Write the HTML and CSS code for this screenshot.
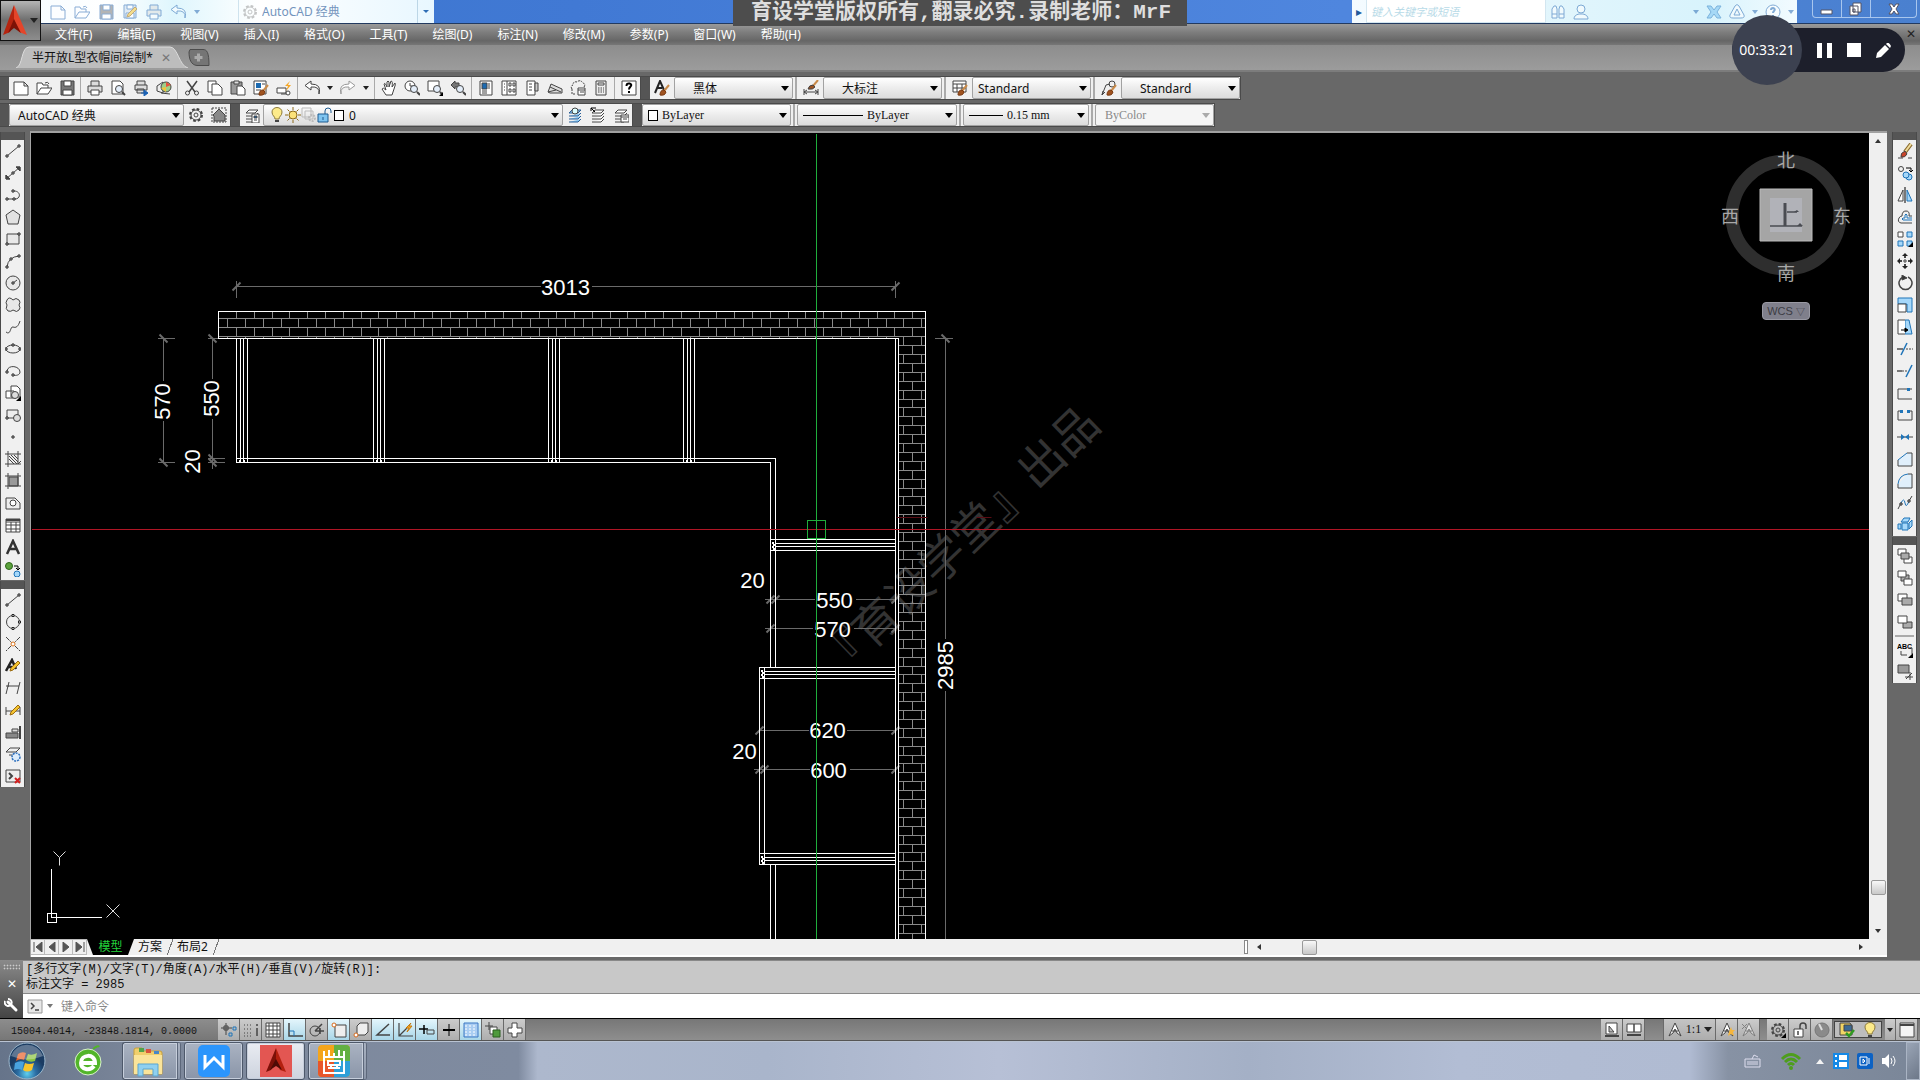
FILE: index.html
```html
<!DOCTYPE html>
<html lang="zh-CN">
<head>
    <meta charset="UTF-8">
    <meta name="viewport" content="width=device-width, initial-scale=1.0">
    <title>AutoCAD</title>
    <link rel="stylesheet" href="styles.css">
</head>
<body>

<header class="titlebar">
    <button class="app-btn" aria-label="应用程序">
        <svg width="24" height="34" viewBox="0 0 24 34"><path d="M11 1 0 31l7-3 4-9z" fill="#b5240f"/><path d="M11 1 24 31l-8-3-5-9z" fill="#e4452a"/><path d="M5 29 11 15l7 14-7-5z" fill="#7d1206"/></svg>
        <span class="caret light"></span>
    </button>
    <div class="quick">
        <div class="tools faded" data-tools="new open save saveas plot undo caret"></div>
        <label class="workspace-pick"><span data-icon="gear"></span>
            <select aria-label="工作空间"><option>AutoCAD 经典</option></select>
        </label>
        <button class="quick-more" aria-label="自定义"><span class="caret"></span></button>
    </div>
    <div class="notice">育设学堂版权所有,翻录必究.录制老师：MrF</div>
    <div class="infocenter">
        <button class="info-toggle" aria-label="展开">▸</button>
        <input type="text" placeholder="键入关键字或短语" aria-label="搜索">
        <div class="tools faded" data-tools="binoc user"></div>
        <div class="tools faded info-right" data-tools="caret exchange a360 caret help2 caret"></div>
    </div>
    <div class="winbtns">
        <button aria-label="最小化"><svg width="14" height="12"><path d="M1 7h11v4H1z" fill="#fff" stroke="#556"/></svg></button>
        <button aria-label="还原"><svg width="14" height="14"><path d="M4 1h8v9H4zM1 4h8v9H1zM4 7h2v3H4z" fill="#fff" stroke="#556"/></svg></button>
        <button aria-label="关闭" class="wide"><svg width="14" height="12"><path d="M2 1h3l2 3 2-3h3L9 6l3 5H9L7 8l-2 3H2l3-5z" fill="#fff" stroke="#556"/></svg></button>
    </div>
</header>

<nav class="menubar">
    <a href="#">文件(F)</a><a href="#">编辑(E)</a><a href="#">视图(V)</a><a href="#">插入(I)</a><a href="#">格式(O)</a><a href="#">工具(T)</a><a href="#">绘图(D)</a><a href="#">标注(N)</a><a href="#">修改(M)</a><a href="#">参数(P)</a><a href="#">窗口(W)</a><a href="#">帮助(H)</a>
    <button class="doc-close" aria-label="关闭图形">✕</button>
</nav>

<div class="filetabs">
    <div class="filetab">
        <svg class="filetab-shape" viewBox="0 0 172 22" preserveAspectRatio="none"><path d="M0 22C7 20 5 1 13 1H154C162 1 163 20 172 22" fill="#bdbdbd" stroke="#dcdcdc"/></svg>
        <span>半开放L型衣帽间绘制*</span><button aria-label="关闭">✕</button>
    </div>
    <button class="newtab" aria-label="新建"><svg width="22" height="17"><path d="M2 .5h13c4 0 6 3 6 16H9C3 16 1 10 1 3z" fill="#757575" stroke="#4c4c4c"/><path d="M10.500 4.500v8M6.500 8.500h8" stroke="#aaa" stroke-width="3"/></svg></button>
</div>

<div class="toolbars">
    <div class="toolrow">
        <div class="toolbar">
            <i class="grip"></i>
            <div class="tools" data-tools="new open save | plot preview publish cube3d | cut copy paste match blockedit | undo caret redo caret | pan zoomrt zoomwin zoomprev | props center palettes sheets markup calc | help"></div>
        </div>
        <div class="toolbar styles">
            <i class="grip"></i>
            <div class="tools" data-tools="textstyle"></div>
            <select class="combo mid indent" aria-label="文字样式"><option>黑体</option></select>
            <i class="sep"></i><div class="tools" data-tools="dimstyle"></div>
            <select class="combo mid indent" aria-label="标注样式"><option>大标注</option></select>
            <i class="sep"></i><div class="tools" data-tools="tablestyle"></div>
            <select class="combo mid" aria-label="表格样式"><option>Standard</option></select>
            <i class="sep"></i><div class="tools" data-tools="leaderstyle"></div>
            <select class="combo mid indent" aria-label="引线样式"><option>Standard</option></select>
        </div>
    </div>
    <div class="toolrow">
        <div class="toolbar">
            <i class="grip"></i>
            <select class="combo work indent-s" aria-label="工作空间"><option>AutoCAD 经典</option></select>
            <div class="tools" data-tools="gear home"></div>
        </div>
        <div class="toolbar">
            <i class="grip"></i>
            <div class="tools" data-tools="layerprops"></div>
            <label class="combo layer">
                <span data-icon="bulb"></span><span data-icon="sun"></span><span data-icon="freeze"></span><span data-icon="unlock"></span><i class="swatch"></i>
                <select aria-label="图层"><option>0</option></select>
            </label>
            <div class="tools" data-tools="layercur layerprev layerstate"></div>
        </div>
        <div class="toolbar">
            <i class="grip"></i>
            <label class="combo color"><i class="swatch"></i><select class="song" aria-label="颜色"><option>ByLayer</option></select></label>
            <i class="sep"></i>
            <label class="combo ltype"><i class="line long"></i><select class="song" aria-label="线型"><option>ByLayer</option></select></label>
            <i class="sep"></i>
            <label class="combo lweight"><i class="line"></i><select class="song" aria-label="线宽"><option>0.15 mm</option></select></label>
            <i class="sep"></i>
            <select class="combo mid song" aria-label="打印样式" disabled><option>ByColor</option></select>
        </div>
    </div>
</div>

<main class="workspace">
    <aside class="dock">
        <div class="vbar"><i class="grip"></i><div class="tools vert" data-tools="line xline pline polygon rect arc circle revcloud spline ellipse earc insert block point hatch gradient region table mtext addsel"></div></div>
        <div class="vbar"><i class="grip"></i><div class="tools vert" data-tools="line circ4 cross editxt dimbreak dimedit plate wipe cmdx"></div></div>
    </aside>

    <section class="viewport">
        <div class="canvas-row">
            <div class="canvas">
                <!-- integer coordinates are whole pixels of the window -->
                <svg class="drawing">
                    <g transform="translate(-30.5 -132.5)">
                        <text class="mark" transform="translate(958 542) rotate(-44)" y="17">『育设学堂』出品</text>
                        <g class="hatch" id="bricks"></g>
                        <g class="dim">
                            <path d="M236 286H540M591 286H895M236 280V297M895 280V297M163 338V380M163 420V462M157 338H174M157 462H174M212 338V378M212 418V468M207 338H224M207 458H224M207 462H224M945 338V638M945 690V940M934 338H952M764 599H814M855 599H895M764 628H812M853 628H895M759 730H808M846 730H895M753 769H809M849 769H895"/>
                            <path class="tick" d="M232 290l8-8M891 290l8-8M159 334l8 8M159 458l8 8M208 334l8 8M208 454l8 8M208 458l8 8M941 334l8 8M766 603l8-8M771 603l8-8M891 603l8-8M766 632l8-8M891 632l8-8M755 734l8-8M891 734l8-8M755 773l8-8M760 773l8-8M891 773l8-8"/>
                        </g>
                        <path class="obj" d="M218 338V311H925V940M218 338H898V940M895 338V940M236 338V462H770V667M236 458H775V667M240 338V462M243 338V462M247 338V462M373 338V462M377 338V462M380 338V462M384 338V462M548 338V462M552 338V462M555 338V462M559 338V462M683 338V462M687 338V462M690 338V462M694 338V462"/>
                        <path class="obj" d="M770 539H895M775 543H895M775 546H895M770 550H895M895 667H759V864H895M764 667V864M764 671H895M764 674H895M759 678H895M759 853H895M764 857H895M764 860H895M770 864V940M775 864V940"/>
                        <path class="obj dots" d="M238 460H247M375 460H384M550 460H559M685 460H694M772 541V550M773 543V550M761 669V678M762 671V678M761 855V864M762 857V864"/>
                        <path class="cross-x" d="M31 529H3000"/>
                        <path class="cross-faint" d="M896 517H927M976 517H991"/>
                        <g class="num">
                            <text x="565" y="294">3013</text>
                            <text x="834" y="607">550</text>
                            <text x="832" y="636">570</text>
                            <text x="827" y="737">620</text>
                            <text x="828" y="777">600</text>
                            <text x="752" y="587">20</text>
                            <text x="744" y="758">20</text>
                            <text transform="translate(169 401) rotate(-90)">570</text>
                            <text transform="translate(218 398) rotate(-90)">550</text>
                            <text transform="translate(199 461) rotate(-90)">20</text>
                            <text transform="translate(952 665) rotate(-90)">2985</text>
                        </g>
                        <path class="cross-y" d="M816 133V3000M807 520H825V538H807Z"/>
                        <path class="obj" d="M51 868V917H101M47 913H56V922H47Z"/>
                        <path class="ucs" d="M53 851l6 6 6-6M59 857v8M106 904l13 13M119 904l-13 13"/>
                    </g>
                </svg>
                <div class="viewcube">
                    <svg width="150" height="140">
                        <circle cx="75" cy="68" r="54" fill="none" stroke="#2e2e2e" stroke-width="13"/>
                        <path d="M49 42h52v52H49z" fill="#a5a5a5" stroke="#bbb"/>
                        <path d="M59 51h32v34H59z" fill="#b1b2b8"/>
                        <path d="M74 56v23M59 79h32M76 65h10" stroke="#4a4c52" stroke-width="1.500"/>
                        <path d="M74 56v23" stroke="#4a4c52" stroke-width="3"/>
                        <path d="M86 79l3-3 3 3M83 65l3-2 2 2" fill="#4a4c52"/>
                        <g><text x="75" y="20">北</text><text x="75" y="133">南</text><text x="19" y="76">西</text><text x="131" y="76">东</text></g>
                    </svg>
                    <button class="wcs">WCS <span>▽</span></button>
                </div>
            </div>
            <div class="vscroll"><i class="arr up"></i><i class="thumb"></i><i class="arr down"></i></div>
        </div>
        <div class="layout-row">
            <div class="layout-nav">
                <button aria-label="首个"><svg width="10" height="10"><path d="M1 0v10M9 0v10L3 5z"/></svg></button>
                <button aria-label="上一个"><svg width="10" height="10"><path d="M8 0v10L2 5z"/></svg></button>
                <button aria-label="下一个"><svg width="10" height="10"><path d="M2 0v10l6-5z"/></svg></button>
                <button aria-label="末个"><svg width="10" height="10"><path d="M9 0v10M1 0v10l6-5z"/></svg></button>
            </div>
            <button class="layout-tab on">模型</button><button class="layout-tab">方案</button><button class="layout-tab">布局2</button>
            <div class="hscroll"><i class="split"></i><i class="arr left"></i><i class="thumb"></i><i class="arr right"></i></div>
        </div>
    </section>

    <aside class="dock right">
        <div class="vbar"><i class="grip"></i><div class="tools vert" data-tools="erase copyobj mirror offset array move rotate scale stretch trim extend breakpt break join chamfer fillet blend explode"></div></div>
        <div class="vbar"><i class="grip"></i><div class="tools vert" data-tools="front back above under | abc hatchback"></div></div>
    </aside>
</main>

<section class="command">
    <div class="command-grip"><i class="dots"></i><button aria-label="关闭">✕</button>
        <button aria-label="自定义"><svg width="15" height="15" viewBox="0 0 15 15"><path d="M4 4l8 8" stroke="#fff" stroke-width="3" stroke-linecap="round"/><path d="M1 3a3.500 3.500 0 1 0 3-2" fill="none" stroke="#fff" stroke-width="2"/></svg></button>
    </div>
    <div class="command-main">
        <div class="history">[多行文字(M)/文字(T)/角度(A)/水平(H)/垂直(V)/旋转(R)]:<br>标注文字 = 2985</div>
        <label class="prompt"><span data-icon="prompt"></span><i class="caret grey"></i><input type="text" placeholder="键入命令" aria-label="命令"></label>
    </div>
</section>

<footer class="status">
    <div class="coords">15004.4014, -23848.1814, 0.0000</div>
    <div class="tools cells" data-tools="infer snap grid ortho* polar osnap* osnap3d otrack* ducs* dyn* lwt tpy* qp sc"></div>
    <div class="status-right">
        <div class="tools cells" data-tools="modelsp layoutsp"></div>
        <button class="scale-btn"><span data-icon="annot"></span>1:1 <i class="caret"></i></button>
        <div class="tools cells" data-tools="annotvis annotauto"></div>
        <div class="tools cells gap" data-tools="gear2 unlock2 dial"></div>
        <div class="tools inset" data-tools="hardware bulb"></div>
        <div class="tools cells" data-tools="caret clean"></div>
    </div>
</footer>

<div class="taskbar">
    <button class="start" aria-label="开始"><svg width="40" height="38" viewBox="0 0 40 38">
        <defs><radialGradient id="orb" cy=".85"><stop offset="0" stop-color="#5fd0ef"/><stop offset=".5" stop-color="#2b6da3"/><stop offset="1" stop-color="#1b3c63"/></radialGradient></defs>
        <circle cx="20" cy="19" r="18" fill="url(#orb)" stroke="#9db8cc"/>
        <path d="M11 12q4-3 8-1l-2 7q-4-2-8 1z" fill="#e8622a"/><path d="M21 12q4 2 9-1l-2 8q-5 2-9-1z" fill="#8bc43f"/><path d="M8 21q5-3 9-1l-2 8q-4-2-8 0z" fill="#49a3e0"/><path d="M18 21q4 2 9 0l-2 7q-5 3-9 0z" fill="#f8c52c"/>
        <path d="M4 14a17 17 0 0 1 32 0q-16 7-32 0z" fill="#fff" opacity=".3"/></svg></button>
    <button class="pinned" aria-label="浏览器"><svg width="32" height="32" viewBox="0 0 32 32"><circle cx="16" cy="17" r="13" fill="#52b52a" stroke="#d9f0cc"/><path d="M9 18h14c0-10-14-9-14 0 0 7 9 8 13 3" fill="none" stroke="#fff" stroke-width="4"/><path d="M21 4q5-4 6-2" fill="none" stroke="#52b52a" stroke-width="2"/></svg></button>
    <button class="task stack" aria-label="资源管理器"><svg width="34" height="32" viewBox="0 0 34 32"><path d="M3 5q0-2 2-2h6l2 3h16q2 0 2 2v21H3z" fill="#f0cf6c" stroke="#c79f3d"/><path d="M3 10h28v19H3z" fill="#fae49a"/><path d="M8 3h5v4H8z" fill="#52a447"/><path d="M15 4h5v4h-5z" fill="#d9533c"/><path d="M23 6h5v3h-5z" fill="#4787c7"/><path d="M7 31V19h20v12h-5v-7H12v7z" fill="#8fd0f0" stroke="#5aa5cf"/></svg></button>
    <button class="task" aria-label="WPS"><svg width="32" height="32"><rect width="32" height="32" rx="5" fill="#2b95fc"/><path d="M7 10v12l9-9 9 9V10" fill="none" stroke="#fff" stroke-width="3"/></svg></button>
    <button class="task on" aria-label="AutoCAD"><svg width="32" height="32"><rect width="32" height="32" fill="#e35652"/><path d="M16 3 6 27l5-2 5-9z" fill="#7c1008"/><path d="M16 3l10 24-6-2-4-9z" fill="#b3200f"/><path d="M10 25l6-11 6 11-6-4z" fill="#4e0a05"/></svg></button>
    <button class="task stack" aria-label="录屏"><svg width="32" height="32"><rect width="32" height="32" rx="4" fill="#f4a51c"/><path d="M16 0h12q4 0 4 4v12H16z" fill="#63b043"/><path d="M16 16h16v12q0 4-4 4H16z" fill="#2e9fd8"/><path d="M0 16h16v16H4q-4 0-4-4z" fill="#e8562a"/><path d="M6 6v22h20V6M6 12h20M11 5v6M16 8v3M21 5v6M10 16h12v4H10zM10 23h12M13 20v4M19 20v4" fill="none" stroke="#fff" stroke-width="2"/></svg></button>
    <div class="tray">
        <svg class="keyb" width="18" height="14"><path d="M1 5h15v8H1zM3 8h11M3 10h11M8 5l2-4 4 2" fill="none" stroke="#dde"/></svg>
        <svg class="wifi" width="22" height="18"><path d="M2 7q9-9 18 0M5 10q6-6 12 0M8 13q3-3 6 0" fill="none" stroke="#4e9e1c" stroke-width="3"/><circle cx="11" cy="16" r="2" fill="#4e9e1c"/></svg>
        <svg width="10" height="8"><path d="M5 2l4 5H1z" fill="#f4f4f4"/></svg>
        <svg width="16" height="16"><path d="M0 0h16v16H0z" fill="#1689e6"/><path d="M2 2h2v2H2zM2 7h2v2H2zM2 12h2v2H2zM6 2h8v5H6zM6 9h8v5H6z" fill="#fff"/></svg>
        <svg width="16" height="16"><rect width="16" height="16" rx="2" fill="#0c62c4"/><path d="M3 4h7v8H3zM12 5v6M6 6l2 2-2 2z" fill="none" stroke="#fff"/></svg>
        <svg width="16" height="16"><path d="M1 5h3l4-4v14l-4-4H1z" fill="#fff"/><path d="M10 5q2 3 0 6M12 3q4 5 0 10" fill="none" stroke="#fff"/></svg>
    </div>
    <button class="show-desktop" aria-label="显示桌面"></button>
</div>

<div class="recorder">
    <div class="time">00:33:21</div>
    <button aria-label="暂停"><svg width="15" height="15"><path d="M0 0h5v15H0zM10 0h5v15h-5z" fill="#fff"/></svg></button>
    <button aria-label="停止"><svg width="14" height="14"><path d="M0 0h14v14H0z" fill="#fff"/></svg></button>
    <button aria-label="画笔"><svg width="15" height="15"><path d="M0 15l1-5L9 2l4 4-8 8zM10 1l1-1q2-1 4 3l-1 2z" fill="#fff"/></svg></button>
</div>

<script src="app.js"></script>
</body>
</html>
```

FILE: app.js
```js
// icon bodies, all on a 16x16 grid, default stroke comes from the css
const brush = '<path d="M15 5l-5 6" stroke="#c98b4a" stroke-width="2"/><path d="M6 15q0-5 4-5l2 2q-1 4-6 3z" fill="#a0531f" stroke="#7a3a12"/>';
const pencil = '<path d="M5 13l1-3 7-7 2 2-7 7z" fill="#f4c430" stroke="#9a6a10"/>';
const dot = (x, y) => `<path d="M${x - 1} ${y - 1}h2v2h-2z" fill="#fff" stroke="#222"/>`;
const gear = '<circle cx="8" cy="8" r="6" stroke-width="2" stroke-dasharray="2.700 2"/><circle cx="8" cy="8" r="5"/><circle cx="8" cy="8" r="2"/>';
const stack = '<path d="M5 3h9l-3 3H2zM2 9h9l3-3M2 12h9l3-3M2 15h9l3-3" fill="#fff"/>';
const bulb = '<path d="M6 12c0-3-3-3-3-7a5 4.500 0 0 1 10 0c0 4-3 4-3 7z" fill="#fdeb8a" stroke="#8c7a3a"/><path d="M6 14h4" stroke-width="2"/>';
const compass = '<path d="M8 1L2 14l4-3 2-4 2 4 4 3zM5 9h6" fill="#fff"/>';
const lens = (x, y) => `<circle cx="${x}" cy="${y}" r="3.500" fill="#e4eefa"/><path d="M${x + 3} ${y + 3}l3 3" stroke-width="2"/>`;

const icons = {
    new: '<path d="M1 2h10l4 4v9H1zM11 2v4h4" fill="#fff"/>',
    open: '<path d="M1 14V3h5l1 2h5v3M1 14l4-6h11l-4 6zM9 3q3-2 4 1" fill="#fff"/>',
    save: '<path d="M2 1h13v14H2z" fill="#777"/><path d="M5 1h7v5H5zM4 10h9v5H4z" fill="#fff"/>',
    saveas: '<path d="M2 1h12v13H2z" fill="#cde"/><path d="M5 1h6v4H5zM4 9h8v5H4z" fill="#fff"/>' + pencil,
    plot: '<path d="M4 6V1h8v5M1 6h14v6H1z" fill="#ddd"/><path d="M4 10h8v5H4z" fill="#fff"/>',
    preview: '<path d="M2 1h8l3 3v10H2z" fill="#fff"/>' + lens(9, 9),
    publish: '<path d="M4 5V1h8v4M2 5h12v5H2zM4 9h7v4H4z" fill="#ddd"/><path d="M8 13h6M11 10l4 3-4 3z" fill="#1c62b5" stroke="#1c62b5"/>',
    cube3d: '<path d="M1 6l6-4v11l-6-2zM5 13l9 1" fill="#eee"/><circle cx="10" cy="7" r="5" fill="#9fd08a"/><path d="M10 2v5l5-2z" fill="#e8533c" stroke="none"/><path d="M5 8l5-1v5z" fill="#f2c53c" stroke="none"/>',
    cut: '<path d="M3 1l8 11M13 1L5 12" stroke-width="1.500"/><circle cx="3.500" cy="13" r="2"/><circle cx="12.500" cy="13" r="2"/>',
    copy: '<path d="M1 1h8v11H1z" fill="#fff"/><path d="M5 4h6l4 4v7H5z" fill="#fff"/>',
    paste: '<path d="M1 2h11v12H1z" fill="#999"/><path d="M4 1h5v3H4z" fill="#ddd"/><path d="M7 6h5l3 3v6H7z" fill="#fff"/>',
    match: '<path d="M1 1h12v13H1z" fill="#fff"/><path d="M3 3h5v5H3z" fill="#1c6ab0" stroke="none"/><path d="M9 4h3M3 10h5"/>' + brush,
    blockedit: '<path d="M1 8h9v5H1zM5 14h8" fill="#fff"/><circle cx="12" cy="13" r="2" fill="#fff"/><path d="M14 1l-5 5h3l-2 5 5-6h-3z" fill="#f6a623" stroke="none"/>',
    undo: '<path d="M15 14q1-8-8-7v3L1 5.500 7 1v3q11 0 8 10z" fill="#fff"/>',
    redo: '<path d="M1 14q-1-8 8-7v3l6-4.500L9 1v3Q-2 4 1 14z" fill="#fff" stroke="#999"/>',
    pan: '<path d="M5 15l-4-6q1-2 4 1L3 4q1-2 3 3V2q1-2 2 0v5l2-6q2 0 1 6l3-4q1 1-1 6l-2 6z" fill="#fff"/>',
    zoomrt: '<circle cx="6" cy="6" r="5" fill="#fff"/><path d="M6 3v3h3"/>' + lens(10, 9),
    zoomwin: '<path d="M1 1h11v10H1z" fill="#fff"/>' + lens(10, 9) + '<path d="M16 12v4h-4z" fill="#000" stroke="none"/>',
    zoomprev: '<path d="M1 5l4-4v2h4v4H5v2z" fill="#777"/>' + lens(10, 9),
    props: '<path d="M2 1h12v14H2zM4 11h5M4 13h5" fill="#fff"/><path d="M4 3h5v6H4z" fill="#1c6ab0"/><path d="M11 3v6"/>',
    center: '<path d="M1 1h14v14H1zM6 1v14" fill="#fff"/><path d="M3 4h1M3 7h1M3 10h1M8 3h2v3H8zM12 3h2v3h-2zM8 9h2v3H8zM12 9h2v3h-2z"/>',
    palettes: '<path d="M3 1h8v14H3z" fill="#fff"/><path d="M11 3h3v8h-3zM5 4h3M5 7h3M5 10h3" fill="#ccc"/>',
    sheets: '<path d="M1 12l3-8 11 5v4H3zM1 12l8-2M3 7l11 5" fill="#ddd"/>',
    markup: '<path d="M2 9q-2-3 1-4 0-4 4-3 3-3 6 1 3 1 1 4M2 9v5h4" stroke-dasharray="2 1"/><path d="M8 8h7v7H8zM8 10h7M10 12h4" fill="#fff"/>',
    calc: '<path d="M3 1h10v14H3z" fill="#eee"/><path d="M5 3h6v2H5z" fill="#fff"/><path d="M5 8h6M5 10h6M5 12h6" stroke-dasharray="1.500 1"/>',
    help: '<path d="M1 1h14v14H1z" fill="#fff"/><path d="M5.500 6q0-3 3-2.500 3 1 1 3Q8 8 8 9.500M8 11v2" stroke="#000" stroke-width="2"/>',
    help2: '<circle cx="8" cy="8" r="7" fill="#fff"/><path d="M6 6q0-2 2-2 3 1 1 3-1 1-1 2M8 11v1" stroke-width="2"/>',
    textstyle: '<path d="M1 13L6 1l4 9M3 8h5" stroke-width="2" stroke="#222"/>' + brush,
    dimstyle: '<path d="M1 9v6M15 9v6M1 12h14M4 10l-3 2 3 2M12 10l3 2-3 2"/><path d="M15 0l-5 6" stroke="#c98b4a" stroke-width="2"/><path d="M5 9q1-4 5-4l2 2q-2 3-7 2z" fill="#a0531f"/>',
    tablestyle: '<path d="M1 1h13v11H1zM1 4h13M1 8h13M5 4v8M10 4v8" fill="#fff"/>' + brush,
    leaderstyle: '<path d="M1 15L5 5l4-1M1 15l1-4M1 15l3-3"/><circle cx="11" cy="4" r="3"/>' + brush,
    gear: gear, gear2: gear + '<path d="M16 11v5h-5z" fill="#000" stroke="none"/>',
    home: '<path d="M1 1h14v14H1z" stroke-dasharray="2 1"/><path d="M2 8l6-6 6 6v6H3V9z" fill="#888"/>',
    layerprops: stack + '<path d="M8 7h7v9H8z" fill="#fff"/><path d="M10 9h3v2h-3z" fill="#1c6ab0"/><path d="M10 13h3"/>',
    layercur: '<g stroke="#2b5f96">' + stack.replace('#fff', '#8ec9f2') + '</g><circle cx="8" cy="4" r="3" fill="#dff"/>',
    layerprev: stack + '<path d="M6 1H1v3M1 1l4 4" stroke="#000"/>',
    layerstate: stack + '<path d="M8 8h8v7H8zM8 10h8M10 12h4" fill="#fff"/>',
    bulb: bulb,
    sun: '<circle cx="8" cy="8" r="4" fill="#fbe27a" stroke="#8c6a1a"/><path d="M8 0v3M8 13v3M0 8h3M13 8h3M2.500 2.500l2 2M11.500 11.500l2 2M2.500 13.500l2-2M11.500 4.500l2-2" stroke="#8c6a1a"/>',
    freeze: '<path d="M1 1h9v9H1zM4 4h8v8H4z" stroke="#bbb"/><circle cx="11" cy="11" r="3" stroke="#bbb" stroke-width="2" stroke-dasharray="2 1"/>',
    unlock: '<path d="M1 7h10v8H1z" fill="#7fc4f0" stroke="#1c5a90"/><path d="M8 7V4q0-3 3-3t3 3v2M6 10v3" stroke="#1c5a90"/>',
    unlock2: '<path d="M2 7h9v8H2z" fill="#fff"/><path d="M8 7V4q0-3 3-3t3 3v3M6 9v4" stroke-width="1.500"/>',
    binoc: '<path d="M2 14V5l2-3h2l1 3v9zM9 14V5l1-3h2l2 3v9zM2 10h5M9 10h5" fill="#fff"/>',
    user: '<circle cx="8" cy="5" r="4" fill="#fff"/><path d="M1 15q0-4 5-5h4q5 1 5 5z" fill="#fff"/>',
    exchange: '<path d="M1 2h4l3 4 3-4h4l-4 6 4 6h-4l-3-4-3 4H1l4-6z" fill="#7cc3f2" stroke="#2e7fc2"/>',
    a360: '<path d="M6 2q2-3 4 0l5 9q1 3-3 3H4q-4 0-3-3z" fill="#fff"/><path d="M8 5l3 6H5z"/>',

    line: '<path d="M2 13L14 3"/>' + dot(2, 13) + dot(14, 3),
    xline: '<path d="M1 14L15 2M1 10v4h4M11 2h4v4"/><path d="M1 14v-4l4 4zM15 2v4l-4-4z" fill="#444"/>' + dot(8, 8),
    pline: '<path d="M2 12h8c6 0 6-8-1-8"/>' + dot(2, 12) + dot(9, 12) + dot(8, 4),
    polygon: '<path d="M8 1l7 5-2 9H3L1 6z" fill="#e2e2e2"/>',
    rect: '<path d="M2 3h12v10H2z" fill="#e8e8e8"/>' + dot(2, 13) + dot(14, 3),
    arc: '<path d="M2 14Q3 4 14 3"/>' + dot(2, 14) + dot(6, 6) + dot(14, 3),
    circle: '<circle cx="8" cy="8" r="7" fill="#e8e8e8"/><path d="M8 8l4-3"/>' + dot(8, 8),
    revcloud: '<path d="M8 3q-4-4-6 0-2 3 0 5-2 4 1 6 3 1 5-1 4 3 6 0 2-2 0-5 2-3 0-5-3-3-6 0z" fill="#e8e8e8"/>',
    spline: '<path d="M1 13c5 4 4-6 7-5s5 0 7-6"/>',
    ellipse: '<ellipse cx="8" cy="8" rx="7" ry="4" fill="#eee"/>' + dot(1, 8) + dot(8, 4) + dot(15, 8),
    earc: '<path d="M2 8c1-7 13-5 13 1 0 3-4 4-7 3"/>' + dot(2, 9) + dot(8, 12),
    insert: '<path d="M6 1h6l3 3v8H6zM1 6h8v7H1z" fill="#fff"/><circle cx="10" cy="10" r="3.500" fill="#ddd"/><path d="M16 11v5h-5z" fill="#000" stroke="none"/>',
    block: '<path d="M2 3h11v8H2z" fill="#eee"/><circle cx="12" cy="11" r="3.500" fill="#ddd"/>' + dot(2, 11),
    point: dot(8, 8),
    hatch: '<path d="M3 0v16M13 0v13M0 3h16M0 13h16M4 5l8 8M4 8l5 5M6 4l7 7M9 4l4 4M13 13l3-3"/>',
    gradient: '<path d="M4 4h9v9H4z" fill="#999"/><path d="M3 0v16M13 0v13M0 3h16M0 13h16"/>',
    region: '<path d="M1 3h9l5 5v6H1z" fill="#eee"/><circle cx="8" cy="8" r="3" fill="#fff"/>',
    table: '<path d="M1 2h14v13H1zM1 5h14M1 8h14M1 12h14M6 5v10M11 5v10" fill="#fff"/><path d="M1 3h14" stroke-width="2"/>',
    mtext: '<path d="M2 15L8 2l6 13M5 10h6" stroke-width="2.500" stroke="#333"/>',
    addsel: '<circle cx="4" cy="5" r="3.500" fill="#5ba23c" stroke="#2c6418"/><path d="M9 5h4v4M11 7l2 2 2-2" stroke="#000"/><circle cx="12" cy="13" r="3" fill="#a6d8fa" stroke="#1f74b8"/>',
    circ4: '<circle cx="8" cy="8" r="6.500"/>' + dot(8, 1.5) + dot(14.5, 8) + dot(8, 14.5),
    cross: '<path d="M1 1l14 14M15 1L1 15" stroke-dasharray="5 1"/><circle cx="8" cy="8" r="2" fill="#fff" stroke="#e07820"/>',
    editxt: '<path d="M1 13L7 2l4 9M3 9h5" stroke-width="2.500" stroke="#222"/>' + pencil,
    dimbreak: '<path d="M1 14L4 2M12 14l3-12M3 6h11M1 6h3"/>',
    dimedit: '<path d="M1 5v8M15 5v8M1 9h14"/>' + pencil,
    plate: '<path d="M1 9h12v5H1z" fill="#888"/><path d="M7 5h6v3H7z" fill="#ddd"/><path d="M15 2v13" stroke-width="2"/>',
    wipe: '<path d="M1 6l4-4h10l-4 4zM4 9h4"/><circle cx="11" cy="11" r="4" fill="#dcecfb" stroke="#2d6fbd" stroke-width="1.500" stroke-dasharray="2 1"/>',
    cmdx: '<path d="M1 2h14v12H1z" fill="#eee"/><path d="M4 5l3 3-3 3" stroke-width="2"/><path d="M10 10l5 5M15 10l-5 5" stroke="#d42020" stroke-width="2"/>',

    erase: '<path d="M1 15h5M11 15h4"/><path d="M14 1l-6 8" stroke="#8a6a2c" stroke-width="4"/><path d="M14 1l-6 8" stroke="#f0dc9c" stroke-width="2"/><path d="M4 14q-1-4 4-6l2 3q-2 4-6 3z" fill="#c8442a"/>',
    copyobj: '<circle cx="4" cy="4" r="2.500"/><path d="M9 3h5v3M12 5l2 2 2-2" stroke="#000"/><g fill="#a6d8fa" stroke="#1f74b8"><circle cx="12" cy="12" r="3"/><circle cx="9" cy="10" r="3"/></g>',
    mirror: '<path d="M6 3v11H1z" fill="#fff"/><path d="M8 0v16" stroke="#000"/><path d="M10 3v11h5z" fill="#a6d8fa" stroke="#1f74b8"/>',
    offset: '<path d="M15 14H4q-4-1-2-5 1-2 3-2 0-5 4-5t3 5h3"/><path d="M15 11H6q-2-1 0-2h2V6q1-2 2 0v3h5" stroke="#1f74b8"/>',
    array: '<path d="M1 1h5v5H1z" fill="#fff"/><g fill="#a6d8fa" stroke="#1f74b8"><path d="M10 1h5v5h-5zM1 10h5v5H1zM10 10h5v5h-5z"/></g><path d="M16 11v5h-5z" fill="#000" stroke="none"/>',
    move: '<path d="M8 1v4M8 11v4M1 8h4M11 8h4" stroke-width="2"/><path d="M8 0l3 3H5zM8 16l3-3H5zM0 8l3-3v6zM16 8l-3-3v6z" fill="#222" stroke="none"/><path d="M7 7h2v2H7z" fill="#fff"/>',
    rotate: '<path d="M6 2a6.500 6.500 0 1 0 5 0" stroke-width="1.500"/><path d="M5 0l5 3-5 2z" fill="#333"/>',
    scale: '<path d="M1 1h14v14h-5V7H1z" fill="#a6d8fa" stroke="#1f74b8"/><path d="M1 7h8v8H1z" fill="#fff"/>',
    stretch: '<path d="M8 1h4l3 14H8z" fill="#a6d8fa" stroke="#1f74b8"/><path d="M8 1H1v14h7" fill="#fff"/><path d="M4 11h6M8 9l3 2-3 2z" stroke="#000" fill="#000"/>',
    trim: '<path d="M0 8h6" stroke="#000"/><path d="M9 8h7" stroke-dasharray="2 1"/><path d="M4 14L10 2" stroke="#1f74b8" stroke-width="1.500"/>',
    extend: '<path d="M0 8h5" stroke="#000"/><path d="M5 8h6" stroke-dasharray="2 1"/><path d="M9 14l6-12" stroke="#1f74b8" stroke-width="1.500"/>',
    breakpt: '<path d="M15 4H1v10h14" fill="#eee"/><path d="M10 3h3v3h-3z" fill="#1f74b8" stroke="none"/>',
    break: '<path d="M4 4H1v9h14V4h-3" fill="#eee"/><path d="M3 3h3v3H3zM10 3h3v3h-3z" fill="#1f74b8" stroke="none"/>',
    join: '<path d="M0 8h16"/><path d="M8 8L4 5v6zM8 8l4-3v6z" fill="#1f74b8" stroke="none"/>',
    chamfer: '<path d="M1 9v6h14V2h-5" fill="#e0effb"/><path d="M1 9l9-7" stroke="#1f74b8"/>',
    fillet: '<path d="M1 11v4h14V1h-4" fill="#e0effb"/><path d="M1 11Q2 2 11 1" stroke="#1f74b8"/>',
    blend: '<path d="M1 14l3-6M12 6l3-5"/><path d="M4 8q3-6 4 0t4-2" stroke="#1f74b8"/>' + dot(4, 9) + dot(12, 6),
    explode: '<g fill="#a6d8fa" stroke="#1f74b8"><path d="M5 6h6v7H5zM4 5l3-4h6l-2 4zM12 6l3-3v6l-3 3zM1 7h3v5H1z"/></g>',
    front: '<path d="M1 1h8v6H1zM7 9h8v6H7z" fill="#fff"/><path d="M4 5h8v6H4z" fill="#aaa"/>',
    back: '<path d="M4 5h8v6H4z" fill="#aaa"/><path d="M1 1h8v6H1zM7 9h8v6H7z" fill="#fff"/>',
    above: '<path d="M1 2h9v7H1z" fill="#fff"/><path d="M5 6h10v7H5z" fill="#aaa"/>',
    under: '<path d="M6 8h9v6H6z" fill="#aaa"/><path d="M1 2h9v7H1z" fill="#fff"/>',
    abc: '<text x="0" y="7">ABC</text><path d="M4 9v4h6M12 6h3v6"/><path d="M16 11v5h-5z" fill="#000" stroke="none"/>',
    hatchback: '<path d="M1 1h11v8H1z" fill="#999"/><path d="M8 13h8M13 8v8M9 15l6-6" />',

    prompt: '<path d="M1 2h14v13H1z" fill="#e8e8e8" stroke="#999"/><path d="M4 5l3 3-3 3M8 12h4" stroke-width="1.500"/>',
    infer: '<path d="M5 1v12M0 6h11M3 4h4v4H3z"/><path d="M12 5h3v3h-3z" stroke="#1f74b8"/><path d="M8 11h3v3H8z" stroke="#1f74b8"/>',
    snap: '<path d="M1 3h9M1 7h9M1 11h9M1 14h9" stroke-dasharray="1 2"/><path d="M14 2v2M14 6v8" stroke-width="1.500"/>',
    grid: '<path d="M1 1h14v14H1zM1 4h14M1 8h14M1 12h14M4 1v14M8 1v14M12 1v14" fill="#fff"/>',
    ortho: '<path d="M2 1v13h14" stroke-width="1.500"/><path d="M2 9h5v5" stroke="#1f74b8"/>',
    polar: '<circle cx="6" cy="9" r="5"/><path d="M6 9h9M6 9l7-7M11 6v6" stroke-width="1.500"/>',
    osnap: '<path d="M4 3h11v12H4z" fill="#eee"/><circle cx="3" cy="3" r="2" fill="#fff" stroke="#d66a1c"/>',
    osnap3d: '<path d="M4 4l3-3h8v9l-3 3H4z" fill="#eee"/><circle cx="3" cy="13" r="2" fill="#fff" stroke="#d66a1c"/>',
    otrack: '<path d="M14 2L2 13h13" stroke-width="1.500"/>',
    ducs: '<path d="M2 1v13h14M2 14l8-8" stroke-width="1.200"/><path d="M14 1l-5 5h3l-2 4 5-6h-3z" fill="#f6a623" stroke="#c47a10"/>',
    dyn: '<path d="M5 3v9M0 7h9" stroke-width="1.500" stroke="#000"/><path d="M8 8h7v4H8z"/>',
    lwt: '<path d="M8 2v12" stroke="#000"/><path d="M2 8h12" stroke="#000" stroke-width="2"/>',
    tpy: '<path d="M1 1h14v14H1z" fill="#a9cdf2" stroke="#3d78c4"/><path d="M2 4h12M2 7h12M2 10h12M2 13h12" stroke="#fff" stroke-dasharray="2 2"/>',
    qp: '<path d="M4 0v8M0 4h8"/><path d="M5 5h7v7H5z" fill="#fff"/><path d="M8 8h7v7H8z" fill="#4f9a3c" stroke="#2b5f1e"/>',
    sc: '<path d="M5 1h5v5h5v5h-5v4H5v-4H1V6h4z" fill="#fff"/>',
    modelsp: '<path d="M2 1h11v11H2zM5 4v6h5z" fill="#fff"/><path d="M1 14h14" stroke-width="2"/>',
    layoutsp: '<path d="M1 2h7v8H1zM8 2h7v8H8z" fill="#fff"/><path d="M1 13h14" stroke-width="2"/>',
    annot: compass,
    annotvis: compass + '<path d="M12 5l1 3h3l-2 2 1 4-3-2-3 2 1-4z" fill="#f6b63c" stroke="none"/>',
    annotauto: '<g opacity=".5">' + compass + '<path d="M1 2l5 5M1 7l5-5"/></g>',
    dial: '<circle cx="8" cy="8" r="7" fill="#8a8a8a" stroke="#777"/><path d="M8 8L5 2" stroke="#ddd" stroke-width="2"/>',
    hardware: '<path d="M1 1h10l2 3v9H1z" fill="#f2d565"/><path d="M5 3h8v6H5z" fill="#3d6a94"/><path d="M7 11l3 3 5-6" stroke="#2f9a22" stroke-width="2.500"/>',
    clean: '<path d="M1 1h14v14H1z" fill="#f4f4f4"/><path d="M1 3h14" stroke-width="2"/>'
};

function svg(name) {
    return `<svg class="icon" viewBox="0 0 16 16">${icons[name]}</svg>`;
}

document.querySelectorAll('[data-icon]').forEach(el => {
    el.innerHTML = svg(el.dataset.icon);
});

// "|" is a separator, a trailing "*" means the toggle is on
document.querySelectorAll('[data-tools]').forEach(bar => {
    bar.innerHTML = bar.dataset.tools.split(' ').map(name => {
        if (name === '|') return '<i class="sep"></i>';
        if (name === 'caret') return '<button class="drop" aria-label="more"><i class="caret"></i></button>';
        const on = name.endsWith('*');
        name = name.replace('*', '');
        return `<button class="tool${on ? ' on' : ''}" aria-label="${name}">${svg(name)}</button>`;
    }).join('');
});

// brick hatch of the wall
const pitch = 8.9;
let d = '';
function row(y0, y1, left, odd) {
    if (y1 < 1200) d += `M${left} ${y1}H925`;
    for (let x = odd ? 227.6 : 236.4; x < 925; x += pitch * 2) {
        if (x > left) d += `M${Math.floor(x)} ${y0}V${y1}`;
    }
}
let top0 = 311;
for (let i = 0; i < 98; i++) {
    const y = Math.floor(318.9 + i * pitch);
    if (y < 338) {
        row(top0, y, 218, i % 2);
    } else {
        if (top0 < 338) d += [...Array(38).keys()].map(k => `M${Math.floor(227.6 + k * pitch * 2)} 336V338`).join('');
        row(top0, y, 898, i % 2);
    }
    top0 = y;
}
document.getElementById('bricks').innerHTML = `<path d="${d}"/>`;
```

FILE: styles.css
```css
* {
    box-sizing: border-box;
}

body {
    margin: 0;
    height: 100vh;
    display: flex;
    flex-direction: column;
    overflow: hidden;
    background: #686868;
    color: #111;
    font: 12px "Noto Sans", "Noto Sans CJK SC", sans-serif;
}

button, input, select {
    font: inherit;
    color: inherit;
    margin: 0;
    padding: 0;
    border: 0;
    background: none;
    border-radius: 0;
}

button {
    display: flex;
    align-items: center;
    justify-content: center;
}

select {
    appearance: none;
}

.caret {
    display: inline-block;
    border: 4px solid transparent;
    border-top: 5px solid #222;
    border-bottom: 0;
}

.caret.grey {
    border-width: 4px 3px 0;
    border-top-color: #777;
}

.icon {
    display: block;
    width: 16px;
    height: 16px;
    fill: none;
    stroke: #444;
    stroke-width: 1;
}

.icon text {
    font: bold 7px "Liberation Sans", sans-serif;
    fill: #000;
    stroke: none;
}

/* title bar */
.titlebar {
    flex: none;
    height: 24px;
    display: flex;
    position: relative;
    background: linear-gradient(90deg, #3a74cc, #4179d4 30%, #4f86de 70%, #4a80cf);
    border-bottom: 1px solid #223a60;
}

.app-btn {
    position: absolute;
    z-index: 2;
    left: 0;
    top: 0;
    width: 41px;
    height: 41px;
    gap: 3px;
    border: 1px solid #111;
    background: linear-gradient(#b5b5b5, #6d6d6d 50%, #8d8d8d);
}

.quick {
    width: 434px;
    padding-left: 46px;
    display: flex;
    background: linear-gradient(90deg, #f4fcff, #fff 25%, #dff6fd 40%, #fff 60%, #e8f7ff);
}

.faded {
    opacity: .55;
}

.faded .icon {
    stroke: #2e6db5;
}

.quick .tools {
    width: 192px;
}

.quick .tool {
    width: 24px;
}

.quick .caret, .infocenter .caret {
    border-width: 3px 3px 0;
    border-top-color: #2e6db5;
}

.workspace-pick {
    flex: 1;
    display: flex;
    align-items: center;
    gap: 4px;
    padding-left: 3px;
    border-left: 1px solid #cfe3ee;
    border-right: 1px solid #bcd6e6;
    color: #7394bd;
}

.workspace-pick .icon {
    opacity: .3;
}

.quick-more {
    width: 16px;
}

.notice {
    position: absolute;
    z-index: 2;
    left: 733px;
    top: 0;
    padding: 0 16px 0 18px;
    height: 26px;
    background: #4d4d4d;
    color: #dedede;
    font: bold 21px/25px "Liberation Mono", "Noto Sans CJK SC", monospace;
    white-space: nowrap;
}

.infocenter {
    width: 445px;
    margin-left: auto;
    display: flex;
    background: linear-gradient(90deg, #f4fbff, #e0f5fc 50%, #d8f3fc 80%, #f2fbff);
}

.info-toggle {
    width: 14px;
    color: #235a9b;
}

.infocenter input {
    width: 180px;
    background: #fff;
    border: 1px solid #d3e6f0;
    border-top: 0;
    padding-left: 4px;
    font-size: 11px;
}

.infocenter input::placeholder {
    color: #b9dbe8;
    font-style: italic;
}

.info-right {
    margin-left: auto;
}

.winbtns {
    display: flex;
    height: 18px;
    margin: 0 3px 0 15px;
    border: 1px solid #a8c6ee;
    border-top: 0;
    border-radius: 0 0 4px 4px;
    overflow: hidden;
}

.winbtns button {
    width: 29px;
    border-right: 1px solid #a8c6ee;
}

.winbtns .wide {
    width: 45px;
    border: 0;
}

/* menu */
.menubar {
    flex: none;
    height: 21px;
    display: flex;
    align-items: center;
    gap: 25px;
    padding: 0 0 2px 55px;
    background: linear-gradient(#9a9a9a, #7d7d7d 40%, #666 80%, #777);
}

.menubar a {
    color: #fff;
    text-decoration: none;
    white-space: nowrap;
}

.doc-close {
    margin-left: auto;
    margin-right: 4px;
    color: #222;
    font-size: 12px;
}

.filetabs {
    flex: none;
    height: 27px;
    display: flex;
    align-items: flex-end;
    padding: 0 0 2px 16px;
    background: linear-gradient(#8d8d8d, #9c9c9c);
    border-bottom: 2px solid #7c7c7c;
}

.filetab {
    position: relative;
    width: 172px;
    height: 22px;
    display: flex;
    align-items: center;
    gap: 8px;
    padding-left: 16px;
}

.filetab-shape {
    position: absolute;
    inset: 0;
    width: 100%;
    height: 100%;
}

.filetab span, .filetab button {
    position: relative;
    white-space: nowrap;
}

.filetab button {
    color: #777;
}

.newtab {
    height: 22px;
}

/* toolbars */
.toolbars {
    flex: none;
    height: 59px;
    padding-top: 4px;
    display: flex;
    flex-direction: column;
    gap: 3px;
}

.toolrow {
    display: flex;
    height: 24px;
}

.toolbar {
    display: flex;
    background: #f0f0f0;
    border: 1px solid #4a4a4a;
    border-left: 0;
}

.grip {
    flex: none;
    width: 9px;
    background: radial-gradient(#999 40%, transparent 50%) 1px 3px / 2px 2px, #555;
    border: 2px solid #555;
}

.tools {
    display: flex;
}

.tool {
    width: 23px;
}

.styles .tool {
    width: 24px;
}

.drop {
    width: 13px;
}

.drop .caret {
    border-width: 4px 3px 0;
}

.sep {
    flex: none;
    width: 6px;
    border: 2px solid #f0f0f0;
    border-width: 0 2px;
    background: #aaa;
}

.tools .sep {
    width: 5px;
}

.combo {
    flex: none;
    display: flex;
    align-items: center;
    gap: 4px;
    padding: 0 20px 0 5px;
    border: 1px solid #a2a2a2;
    border-radius: 2px;
    background: url("data:image/svg+xml,%3Csvg xmlns='http://www.w3.org/2000/svg' width='8' height='5'%3E%3Cpath d='M0 0h8L4 5z'/%3E%3C/svg%3E") right 3px center no-repeat, linear-gradient(#fff, #ececec 50%, #dcdcdc);
}

.combo select {
    flex: 1;
    min-width: 0;
}

.combo:disabled {
    color: #888;
    opacity: 1;
    background: #f5f5f5 url("data:image/svg+xml,%3Csvg xmlns='http://www.w3.org/2000/svg' width='8' height='5'%3E%3Cpath fill='%23aaa' d='M0 0h8L4 5z'/%3E%3C/svg%3E") right 3px center no-repeat;
    padding-left: 9px;
}

.mid { width: 119px; }
.work { width: 175px; }
.layer { width: 300px; gap: 0; }
.color { width: 149px; }
.ltype { width: 160px; }
.lweight { width: 126px; }
.indent { padding-left: 18px; }
.indent-s { padding-left: 8px; }

.layer .swatch {
    margin: 0 5px 0 1px;
}

.song {
    font-family: "Liberation Serif", serif;
}

.swatch {
    width: 10px;
    height: 11px;
    border: 1px solid #000;
    background: #fff;
}

.line {
    width: 34px;
    height: 1px;
    background: #000;
}

.line.long {
    width: 60px;
}

/* workspace */
.workspace {
    flex: 1;
    min-height: 0;
    display: flex;
}

.dock {
    flex: none;
    width: 30px;
    display: flex;
    flex-direction: column;
    gap: 1px;
    padding-top: 1px;
}

.dock.right {
    width: 33px;
    padding-left: 5px;
}

.vbar {
    width: 25px;
    display: flex;
    flex-direction: column;
    background: #f0f0f0;
    border: 1px solid #4a4a4a;
    border-width: 0 1px;
}

.vbar .grip {
    width: auto;
    height: 8px;
}

.vert {
    flex-direction: column;
}

.vert .tool {
    width: 23px;
    height: 22px;
}

.vert .sep {
    width: auto;
    height: 6px;
    border-width: 2px 0;
    margin: 0 2px;
}

.viewport {
    flex: 1;
    min-width: 0;
    display: flex;
    flex-direction: column;
    border-top: 2px solid #a0a0a0;
    border-left: 1px solid #a5a5a5;
}

.canvas-row {
    flex: 1;
    min-height: 0;
    display: flex;
}

.canvas {
    flex: 1;
    position: relative;
    overflow: hidden;
    background: #000;
}

.drawing {
    display: block;
    width: 100%;
    height: 100%;
    fill: none;
}

.obj {
    stroke: #fff;
    shape-rendering: crispEdges;
}

.obj.dots {
    stroke-width: 2;
    stroke-dasharray: 2 2;
}

.hatch {
    stroke: #8a8a8a;
    shape-rendering: crispEdges;
}

.dim {
    stroke: #6a6a6a;
    shape-rendering: crispEdges;
}

.tick {
    stroke-width: 2;
    shape-rendering: auto;
}

.ucs {
    stroke: #ddd;
}

.num {
    fill: #fff;
    font: 22px "Liberation Sans", sans-serif;
    text-anchor: middle;
}

.mark {
    fill: #333;
    font: 46px "Noto Sans CJK SC", sans-serif;
    text-anchor: middle;
}

.cross-x {
    stroke: #b01525;
    shape-rendering: crispEdges;
}

.cross-faint {
    stroke: #5a0c14;
}

.cross-y {
    stroke: #1fae3c;
    shape-rendering: crispEdges;
}

.viewcube {
    position: absolute;
    top: 14px;
    right: 8px;
    display: flex;
    flex-direction: column;
    align-items: center;
    gap: 15px;
}

.viewcube svg {
    overflow: visible;
}

.viewcube text {
    fill: #a8a8a8;
    font: 18px "Noto Sans CJK SC", sans-serif;
    text-anchor: middle;
}

.wcs {
    width: 48px;
    height: 18px;
    gap: 3px;
    border: 1px solid #9a9aa4;
    border-radius: 4px;
    background: #7f7f8b;
    color: #3c3c44;
    font: 11px "Liberation Sans", sans-serif;
}

.wcs span {
    font-size: 9px;
}

.vscroll {
    width: 18px;
    background: #efefef;
    display: flex;
    flex-direction: column;
    align-items: center;
    padding: 6px 0;
}

.vscroll .thumb {
    margin: auto 0 34px;
}

.thumb {
    width: 15px;
    height: 15px;
    border: 1px solid #999;
    border-radius: 2px;
    background: linear-gradient(#f8f8f8, #c8c8c8);
}

.arr {
    border: 3px solid transparent;
}

.arr.up { border-bottom: 4px solid #333; border-top: 0; }
.arr.down { border-top: 4px solid #333; border-bottom: 0; }
.arr.left { border-right: 4px solid #333; border-left: 0; }
.arr.right { border-left: 4px solid #333; border-right: 0; }

.layout-row {
    flex: none;
    height: 18px;
    display: flex;
    background: #f0f0f0;
    border-bottom: 2px solid #fff;
}

.layout-nav {
    display: flex;
}

.layout-nav button {
    width: 14px;
    border: 1px solid #bbb;
    border-left: 0;
}

.layout-nav svg {
    fill: #555;
    stroke: #555;
}

.layout-tab {
    padding: 0 11px 0 4px;
    line-height: 14px;
    background: linear-gradient(110deg, transparent calc(100% - 6px), #777 calc(100% - 6px), #777 calc(100% - 5px), transparent calc(100% - 5px));
}

.layout-tab.on {
    width: 47px;
    padding: 0;
    background: #000;
    color: #23d33b;
    clip-path: polygon(0 0, 100% 0, 41px 100%, 6px 100%);
}

.hscroll {
    flex: none;
    width: 35%;
    margin-left: auto;
    display: flex;
    align-items: center;
    padding: 0 24px 0 7px;
}

.split {
    width: 4px;
    height: 14px;
    margin-right: 9px;
    border: 1px solid #888;
    background: #fff;
}

.hscroll .thumb {
    margin: 0 auto 0 41px;
}

/* command line */
.command {
    flex: none;
    height: 58px;
    margin-top: 3px;
    display: flex;
}

.command-grip {
    width: 23px;
    display: flex;
    flex-direction: column;
    align-items: center;
    justify-content: space-between;
    padding: 4px 0 5px;
    background: linear-gradient(#8a8a8a, #444);
}

.command-grip button {
    color: #fff;
    font-size: 12px;
    line-height: 12px;
}

.dots {
    width: 17px;
    height: 6px;
    background: radial-gradient(#ccc 40%, transparent 50%) 0 0 / 3px 3px;
}

.command-main {
    flex: 1;
}

.history {
    height: 34px;
    padding: 2px 3px;
    background: #c8c8c8;
    border-top: 1px solid #888;
    border-bottom: 1px solid #888;
    font: 12px/15px "Liberation Mono", "Noto Sans CJK SC", monospace;
}

.prompt {
    height: 24px;
    display: flex;
    align-items: center;
    gap: 4px;
    padding-left: 4px;
    background: #fff;
}

.prompt input {
    flex: 1;
    margin-left: 4px;
    outline: 0;
}

.prompt input::placeholder {
    color: #888;
}

/* status bar */
.status {
    flex: none;
    height: 23px;
    display: flex;
    background: linear-gradient(#777, #8e8e8e);
    border-top: 1px solid #000;
    border-bottom: 1px solid #555;
}

.coords {
    width: 218px;
    padding-left: 11px;
    background: linear-gradient(#8d8d8d, #777);
    font: 10px/25px "Liberation Mono", monospace;
    white-space: nowrap;
}

.cells .tool, .cells .drop {
    width: 22px;
    border-right: 1px solid #6a6a6a;
    background: linear-gradient(#ccc, #adadad);
}

.cells .drop {
    width: 11px;
}

.cells .tool.on {
    background: linear-gradient(#e4f6fc, #a9d6e8);
}

.status-right {
    margin-left: auto;
    display: flex;
    padding-right: 2px;
}

.scale-btn {
    width: 53px;
    margin-left: 18px;
    gap: 3px;
    border: 1px solid #6a6a6a;
    border-width: 0 1px;
    background: linear-gradient(#c4c4c4, #adadad);
    font-family: "Liberation Serif", serif;
}

.gap {
    margin-left: 7px;
}

.inset {
    margin: 2px 3px 2px 1px;
    border: 1px solid #444;
    background: #bdbdbd;
}

/* taskbar */
.taskbar {
    flex: none;
    height: 39px;
    display: flex;
    align-items: center;
    border-top: 1px solid #b9c3d2;
    background: linear-gradient(90deg, #66748a, #7d889b 8%, #7f8ba0 27%, #adb8cd 28%, #a9b5cb 40%, #b7c0d6 52%, #a4b0c6 65%, #b2bdd4 76%, #b0bbd2 88%, #8792a4 90%, #7a8698);
}

.start {
    width: 54px;
}

.pinned {
    width: 68px;
}

.task {
    width: 59px;
    height: 38px;
    margin-right: 3px;
    border: 1px solid #4d586a;
    border-radius: 3px;
    box-shadow: inset 0 0 0 1px #c6cedb;
    background: linear-gradient(#aab3c2, #8a95a8);
}

.task.on {
    background: linear-gradient(#e9ecf2, #cdd3de);
}

.stack {
    padding-right: 4px;
    border-right: 4px double #5d687b;
}

.tray {
    margin-left: auto;
    display: flex;
    align-items: center;
    gap: 8px;
    padding-right: 9px;
}

.keyb {
    margin-right: 10px;
}

.wifi {
    margin-right: 5px;
}

.show-desktop {
    width: 14px;
    height: 100%;
    border: 1px solid #aab4c4;
    background: linear-gradient(135deg, #9aa5b6, #6d7889);
}

/* screen recorder, floats over everything */
.recorder {
    position: fixed;
    z-index: 5;
    top: 28px;
    right: 15px;
    height: 44px;
    display: flex;
    align-items: center;
    padding-right: 14px;
    gap: 15px;
    border-radius: 22px;
    background: #1d1f2b;
}

.time {
    width: 70px;
    height: 70px;
    border-radius: 50%;
    background: #3c4150;
    color: #fff;
    font: 14px/70px "Noto Sans", sans-serif;
    text-align: center;
}
```
